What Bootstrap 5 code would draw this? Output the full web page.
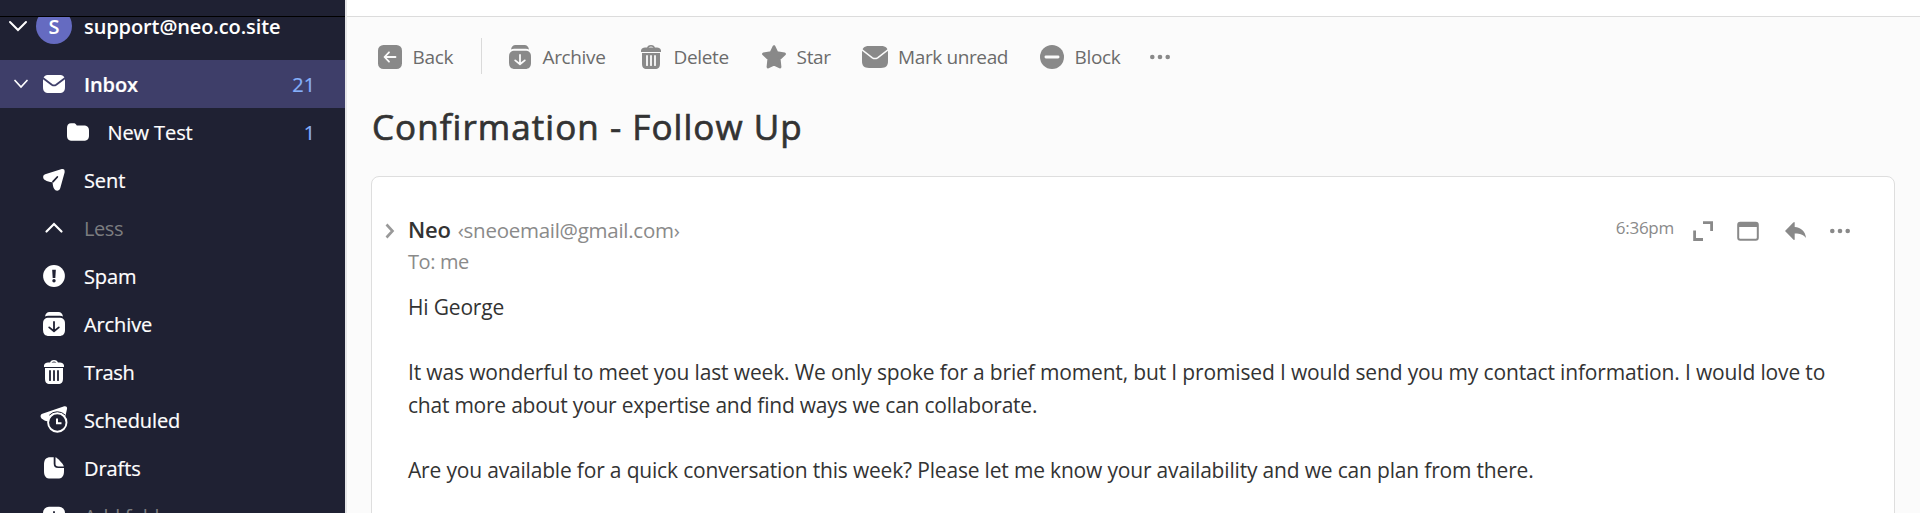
<!DOCTYPE html>
<html lang="en">
<head>
<meta charset="utf-8">
<title>Confirmation - Follow Up</title>
<link href="https://cdn.jsdelivr.net/npm/bootstrap@5.3.0/dist/css/bootstrap.min.css" rel="stylesheet">
<style>
body{font-family:"Open Sans","Noto Sans",sans-serif;background:#fbfbfb;color:#333;height:513px;overflow:hidden}
.side{width:345px;background:#1f2133;color:#fff;font-size:20px;font-weight:500;letter-spacing:-.1px}
.side-top{height:17px;border-bottom:1px solid #000}
.account{height:43px;overflow:hidden;font-weight:600}
.account-in{height:36px;margin-top:-9px;padding-left:8px}
.account-in .addr-label{padding-top:2px}
.avatar{width:36px;height:36px;background:#656bc1;margin-left:8px;margin-right:12px;padding-top:2px}
.folder{height:48px;padding:0 30px 0 14px;color:#fff;text-decoration:none;line-height:28px}
.folder .label,.count{padding-top:2px;-webkit-text-stroke:.2px}
.folder .caret{width:14px;margin-right:14px}
.folder .glyph{margin-right:18px;overflow:visible}
.folder.sub{padding-left:37px}
.folder.active-row{background:#3e3e69;font-weight:600}
.count{color:#86b0fa;font-weight:500}
.dim{color:#7c7d80}
.folder.dim .label{letter-spacing:-.4px;-webkit-text-stroke:0}
.edge{width:2px;background:#e6e6e8}
svg{display:block;flex:none}
.topline{height:17px;background:#fff;border-bottom:1px solid #dcdcdc}
.tools{height:80px;padding-left:31px;font-size:19px;letter-spacing:-.38px;color:#6b6b6b}
.tool{gap:10.6px;line-height:26px}
.rule{width:1px;height:36px;background:#dadada;margin:0 26px 2px 0}
.ic{color:#898989}
.cut{fill:none;stroke:var(--cut,#1f2133);stroke-width:1.8;stroke-linecap:round;stroke-linejoin:round}
.main-pane{--cut:#fbfbfb}
.active-row{--cut:#3e3e69}
.subject{font-size:35px;font-weight:500;letter-spacing:1.05px;line-height:48px;margin:6px 0 25px 25px;height:48px;-webkit-text-stroke:.7px}
.mail{margin:0 25px 0 24px;height:400px;border:1.5px solid #dedede;border-radius:8px;background:#fff;padding:36px 43px 0 11px}
.muted{color:#8a8a8a}
.from{font-size:22px;font-weight:600;line-height:32px;height:32px;letter-spacing:-.2px;margin-left:-1px}
.addr{font-size:20.5px;letter-spacing:-.27px;font-weight:400;margin-left:7px}
.to{font-size:20px;letter-spacing:-.4px;line-height:32px;padding-top:1px;margin-left:-1px}
.when{font-size:17px;letter-spacing:-.25px;line-height:24px;margin-top:-7px}
.text{font-size:21px;line-height:32.6px;margin-top:13px;margin-left:25px;letter-spacing:-.18px;white-space:nowrap}
.text p{margin:0 0 32.6px}
.l1{letter-spacing:-.15px}.l2{letter-spacing:-.23px}
</style>
</head>
<body>
<svg width="0" height="0" class="position-absolute">
<defs>
<symbol id="archive" viewBox="0 0 24 24"><path fill="currentColor" d="M3 4.600C3.600 1.600 5 0 7.500 0h9C19 0 20.400 1.600 21 4.600 19.500 3.800 17 3.800 12 3.800S4.500 3.800 3 4.600z"/><path fill="currentColor" d="M7 5.700h10c4 0 6 1.800 6 5.800v6c0 4.500-2 6.500-6 6.500H7c-4 0-6-2-6-6.500v-6c0-4 2-5.800 6-5.800z"/><path class="cut" d="M12 10v9M7.200 15.400l4.800 3.900 4.800-3.900"/></symbol>
<symbol id="trash" viewBox="0 0 24 24"><path fill="none" stroke="currentColor" stroke-width="1.400" d="M8.700 3.200C9 1.300 9.800.8 12 .8s3 .5 3.300 2.400"/><path fill="currentColor" d="M2 7V5.500C2.500 3.500 4 2.600 6 2.600h12c2 0 3.500.9 4 2.900V7zM3 8h18v10.500c0 3.800-1.500 5.500-5 5.500H8c-3.500 0-5-1.700-5-5.500z"/><path class="cut" d="M8 11v9.200M12 11v9.200M16 11v9.200"/></symbol>
<symbol id="mail" viewBox="0 0 24 24"><path fill="currentColor" d="M7 3h10c4.500 0 6 1.700 6 6v6c0 4.300-1.500 6-6 6H7c-4.500 0-6-1.700-6-6V9c0-4.300 1.500-6 6-6z"/><path class="cut" d="M1.200 6.200l8.600 6.500c1.600 1 2.800 1 4.400 0l8.600-6.500"/></symbol>
<symbol id="dots" viewBox="0 0 22 8"><g fill="currentColor"><circle cx="3.300" cy="4" r="2.300"/><circle cx="11" cy="4" r="2.300"/><circle cx="18.700" cy="4" r="2.300"/></g></symbol>
</defs>
</svg>

<div class="d-flex h-100">
<aside class="side flex-shrink-0 overflow-hidden">
  <div class="side-top"></div>
  <div class="account"><div class="account-in d-flex align-items-center">
    <svg width="20" height="12" viewBox="0 0 20 12" fill="none" stroke="#fff" stroke-width="2" stroke-linecap="round"><path d="M2 2l8 8 8-8"/></svg>
    <span class="avatar rounded-circle d-flex align-items-center justify-content-center">S</span>
    <span class="addr-label">support@neo.co.site</span></div></div>
  <a class="folder active-row d-flex align-items-center">
    <svg class="caret" height="10" viewBox="0 0 14 10" fill="none" stroke="#fff" stroke-width="1.700" stroke-linecap="round"><path d="M1 1.500l6 6.500 6-6.500"/></svg>
    <svg class="glyph" width="24" height="24"><use href="#mail"/></svg><span class="label">Inbox</span><span class="count ms-auto">21</span></a>
  <a class="folder sub d-flex align-items-center"><span class="caret m-0"></span>
    <svg class="glyph ms-3 me-3" width="22" height="24" viewBox="1 0 22 24"><path fill="#fff" d="M1 8c0-3 1.400-4.700 4-4.700h2.500c1.300 0 1.900.3 2.600 1.300l.7 1h6.700c3.800 0 5.500 1.600 5.500 5v5c0 3.700-1.600 5.200-5.500 5.200h-11C2.600 20.800 1 19.300 1 15.600z"/></svg><span class="label ps-1" style="margin-left:-1.500px">New Test</span><span class="count ms-auto">1</span></a>
  <a class="folder d-flex align-items-center"><span class="caret"></span>
    <svg class="glyph" width="24" height="24"><path fill="#fff" d="M3.200 6.200L19 1.300c2.800-.8 4 .3 3.600 3.200L18.300 20c-.8 3.200-4.600 3.700-6.200.8-.9-1.900-1.400-3.800-1.500-6.600-3 .1-5.200-.7-7.600-2.100C.6 10.400.5 7.200 3.200 6.200z"/><path class="cut" d="M11 13.700l4.300-4.700"/></svg><span class="label">Sent</span></a>
  <a class="folder dim d-flex align-items-center"><span class="caret"></span>
    <svg class="glyph" width="24" height="24" fill="none" stroke="#fff" stroke-width="2.200" stroke-linecap="round"><path d="M4.500 15.500L12 8l7.500 7.500"/></svg><span class="label">Less</span></a>
  <a class="folder d-flex align-items-center"><span class="caret"></span>
    <svg class="glyph" width="24" height="24"><circle cx="12" cy="12" r="10.900" fill="#fff"/><path fill="#1f2133" d="M10.200 5.800h3.600l-.5 8.200h-2.600z"/><circle cx="12" cy="16.700" r="1.700" fill="#1f2133"/></svg><span class="label">Spam</span></a>
  <a class="folder d-flex align-items-center"><span class="caret"></span>
    <svg class="glyph" width="24" height="24"><use href="#archive"/></svg><span class="label">Archive</span></a>
  <a class="folder d-flex align-items-center"><span class="caret"></span>
    <svg class="glyph" width="24" height="24"><use href="#trash"/></svg><span class="label" style="letter-spacing:-.35px">Trash</span></a>
  <a class="folder d-flex align-items-center"><span class="caret"></span>
    <svg class="glyph" width="24" height="24"><path fill="#fff" d="M.3 5.800L21.500-1.500c2.600-.8 4 .4 3.500 2.600L23.200 9 5.500 13.300c-2-.2-4-1.100-5.900-2.700C-2 9-1.800 6.600.3 5.800z"/><circle cx="15.300" cy="14.500" r="9.200" fill="#1f2133" stroke="#fff" stroke-width="1.900"/><path d="M7.300 7.200a11 11 0 0 1 16 0" fill="none" stroke="#1f2133" stroke-width="1"/><path d="M15 10.500v4.800h4.500" fill="none" stroke="#fff" stroke-width="2"/></svg><span class="label">Scheduled</span></a>
  <a class="folder d-flex align-items-center"><span class="caret"></span>
    <svg class="glyph" width="24" height="24" fill="#fff"><path d="M11.700 1.200v6.300c0 3.200 1.300 4.600 4.500 4.600H22V15c0 5.500-2 7.600-6.500 7.600h-7C4 22.600 2 20.500 2 15V9c0-5.600 2-7.800 6.500-7.800z"/><path d="M13.500 1.200c1.500.3 7.800 6.400 8.300 9.200h-5.300c-2.200 0-3-.8-3-3z"/></svg><span class="label">Drafts</span></a>
  <a class="folder dim d-flex align-items-center"><span class="caret"></span>
    <svg class="glyph" width="24" height="24"><rect x="1" y="2.800" width="22" height="20" rx="6" fill="#fff"/><path class="cut" d="M12 8v10M7 13h10"/></svg><span class="label">Add folder</span></a>
</aside>
<div class="edge flex-shrink-0"></div>

<main class="main-pane flex-grow-1 overflow-hidden">
  <div class="topline"></div>
  <div class="tools d-flex align-items-center">
    <div class="tool d-flex align-items-center" style="width:103px"><svg class="ic" width="24" height="24"><rect width="24" height="24" rx="5.500" fill="currentColor"/><path class="cut" d="M17.500 12h-10.500M11 7.300L6.500 12l4.500 4.700"/></svg>Back</div>
    <div class="rule"></div>
    <div class="tool d-flex align-items-center" style="width:131px"><svg class="ic" width="24" height="24"><use href="#archive"/></svg>Archive</div>
    <div class="tool d-flex align-items-center" style="width:123px"><svg class="ic" width="24" height="24"><use href="#trash"/></svg>Delete</div>
    <div class="tool d-flex align-items-center" style="width:100px"><svg class="ic" width="24" height="24"><path fill="currentColor" stroke="currentColor" stroke-width="2.800" stroke-linejoin="round" d="M12 1.600l2.900 6 7.600 1.300-5.300 5.200.8 7.900-6-2.800-6 2.800.8-7.900L1.500 8.900l7.600-1.300z"/></svg>Star</div>
    <div class="tool d-flex align-items-center" style="width:178px;gap:10px"><svg class="ic" width="26" height="22" viewBox="1 2.500 22 19" preserveAspectRatio="none"><path fill="currentColor" d="M7 2.500h10c4.500 0 6 2 6 6v7c0 4-1.500 6-6 6H7c-4.500 0-6-2-6-6v-7c0-4 1.500-6 6-6z"/><path class="cut" d="M1 5.800l8.800 6.900c1.600 1 2.800 1 4.400 0L23 5.800" style="stroke-width:1.300"/></svg>Mark unread</div>
    <div class="tool d-flex align-items-center" style="width:109px"><svg class="ic" width="24" height="24"><circle cx="12" cy="12" r="12" fill="currentColor"/><path class="cut" style="stroke-width:2.800" d="M5.900 12h12.200"/></svg>Block</div>
    <svg class="ic" width="22" height="8"><use href="#dots"/></svg>
  </div>
  <h1 class="subject">Confirmation - Follow Up</h1>
  <article class="mail">
    <div class="d-flex align-items-start">
      <svg class="ic" width="14" height="18" style="margin-top:9px" fill="none" stroke="#999" stroke-width="2.600"><path d="M3.500 2.500L9.500 9l-6 6.500"/></svg>
      <div class="ms-2 ps-1 flex-grow-1">
        <div class="from d-flex align-items-baseline"><span>Neo</span><span class="addr muted">‹sneoemail@gmail.com›</span></div>
        <div class="to muted">To: me</div>
      </div>
      <div class="d-flex align-items-center ic pt-1 mt-1">
        <span class="when muted">6:36pm</span>
        <svg width="20" height="20" style="margin-left:19px" fill="none" stroke="currentColor" stroke-width="2.800"><path d="M10 1.600h8.600V10M1.600 9.500v9H10"/></svg>
        <svg width="22" height="20" style="margin-left:24px"><rect x="1.200" y="1.700" width="19.600" height="17" rx="2" fill="none" stroke="currentColor" stroke-width="2"/><path fill="currentColor" d="M1 2h20v4H1z"/></svg>
        <svg width="22" height="20" style="margin-left:26px" fill="currentColor"><path d="M0 10L8.300 1.500Q9.700.3 9.700 2v4C16 6.400 20.500 10.500 21 17c-3-3.700-6.500-4.600-11.300-4.500V18q0 1.700-1.400.4z"/></svg>
        <svg width="22" height="8" style="margin-left:22px"><use href="#dots"/></svg>
      </div>
    </div>
    <div class="text">
      <p>Hi George</p>
      <p><span class="l1">It was wonderful to meet you last week. We only spoke for a brief moment, but I promised I would send you my contact information. I would love to</span><br><span class="l2">chat more about your expertise and find ways we can collaborate.</span></p>
      <p>Are you available for a quick conversation this week? Please let me know your availability and we can plan from there.</p>
    </div>
  </article>
</main>
</div>
<script src="https://cdn.jsdelivr.net/npm/bootstrap@5.3.0/dist/js/bootstrap.bundle.min.js"></script>
</body>
</html>
